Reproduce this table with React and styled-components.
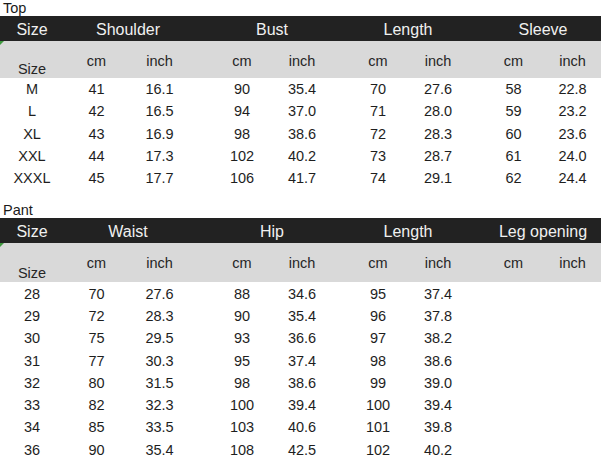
import React from 'react';
import styled, { createGlobalStyle } from 'styled-components';

const GlobalStyle = createGlobalStyle`
  body {
    margin: 0;
    background: #ffffff;
    color: #1e1e1e;
    font-family: "Liberation Sans", Arial, sans-serif;
  }
`;

// column groups: left gap before the group and width of each of its two cells
const GROUPS = [
  { offset: 1, w: 63 },
  { offset: 21, w: 60 },
  { offset: 16, w: 60 },
  { offset: 16, w: 59 },
];

const topRows = [
  ['M', '41', '16.1', '90', '35.4', '70', '27.6', '58', '22.8'],
  ['L', '42', '16.5', '94', '37.0', '71', '28.0', '59', '23.2'],
  ['XL', '43', '16.9', '98', '38.6', '72', '28.3', '60', '23.6'],
  ['XXL', '44', '17.3', '102', '40.2', '73', '28.7', '61', '24.0'],
  ['XXXL', '45', '17.7', '106', '41.7', '74', '29.1', '62', '24.4'],
];

const pantRows = [
  ['28', '70', '27.6', '88', '34.6', '95', '37.4', '', ''],
  ['29', '72', '28.3', '90', '35.4', '96', '37.8', '', ''],
  ['30', '75', '29.5', '93', '36.6', '97', '38.2', '', ''],
  ['31', '77', '30.3', '95', '37.4', '98', '38.6', '', ''],
  ['32', '80', '31.5', '98', '38.6', '99', '39.0', '', ''],
  ['33', '82', '32.3', '100', '39.4', '100', '39.4', '', ''],
  ['34', '85', '33.5', '103', '40.6', '101', '39.8', '', ''],
  ['36', '90', '35.4', '108', '42.5', '102', '40.2', '', ''],
];

const Page = styled.div`
  width: 602px;
`;

const SectionLabel = styled.div`
  font-size: 14.5px;
  line-height: 16px;
  padding-left: 3px;
  margin-top: ${({ $top }) => $top || 0}px;
  height: 16px;
  color: #1a1a1a;
`;

const HeadBar = styled.div`
  display: flex;
  align-items: center;
  width: 601px;
  height: 25px;
  box-sizing: border-box;
  padding-top: 2px;
  background: #222222;
  color: #f0f0f0;
  font-size: 16px;
  line-height: 18px;
`;

const SubHead = styled.div`
  position: relative;
  display: flex;
  width: 601px;
  height: ${({ $h }) => $h}px;
  background: #d9d9d9;
  color: #262626;
  font-size: 14.5px;
  line-height: 16px;

  &::before {
    content: '';
    position: absolute;
    left: 0;
    top: 0;
    border-top: 4px solid #3f9a3f;
    border-right: 4px solid transparent;
  }
`;

const Row = styled.div`
  display: flex;
  align-items: center;
  height: 22.3px;
  font-size: 14.5px;
  line-height: 16px;
`;

const SizeCell = styled.div`
  flex: none;
  width: 64px;
  text-align: center;
  align-self: ${({ $bottom }) => ($bottom ? 'flex-end' : 'auto')};
  padding-bottom: ${({ $bottom }) => ($bottom ? '1px' : '0')};
`;

const Group = styled.div`
  flex: none;
  display: flex;
  margin-left: ${({ $offset }) => $offset}px;
  width: ${({ $w }) => $w * 2}px;
  justify-content: center;
  padding-top: ${({ $pad }) => $pad || 0}px;
  white-space: nowrap;
`;

const Cell = styled.div`
  flex: none;
  width: ${({ $w }) => $w}px;
  text-align: center;
`;

const SizeTable = ({ label, labelTop, titles, rows, subHeight }) => (
  <>
    <SectionLabel $top={labelTop}>{label}</SectionLabel>
    <HeadBar>
      <SizeCell>Size</SizeCell>
      {GROUPS.map((g, i) => (
        <Group key={i} $offset={g.offset} $w={g.w}>
          {titles[i]}
        </Group>
      ))}
    </HeadBar>
    <SubHead $h={subHeight}>
      <SizeCell $bottom>Size</SizeCell>
      {GROUPS.map((g, i) => (
        <Group key={i} $offset={g.offset} $w={g.w} $pad={12}>
          <Cell $w={g.w}>cm</Cell>
          <Cell $w={g.w}>inch</Cell>
        </Group>
      ))}
    </SubHead>
    {rows.map((r) => (
      <Row key={r[0]}>
        <SizeCell>{r[0]}</SizeCell>
        {GROUPS.map((g, i) => (
          <Group key={i} $offset={g.offset} $w={g.w}>
            <Cell $w={g.w}>{r[1 + i * 2]}</Cell>
            <Cell $w={g.w}>{r[2 + i * 2]}</Cell>
          </Group>
        ))}
      </Row>
    ))}
  </>
);

const App = () => (
  <Page>
    <GlobalStyle />
    <SizeTable
      label="Top"
      titles={['Shoulder', 'Bust', 'Length', 'Sleeve']}
      rows={topRows}
      subHeight={37}
    />
    <SizeTable
      label="Pant"
      labelTop={13}
      titles={['Waist', 'Hip', 'Length', 'Leg opening']}
      rows={pantRows}
      subHeight={39}
    />
  </Page>
);

export default App;
